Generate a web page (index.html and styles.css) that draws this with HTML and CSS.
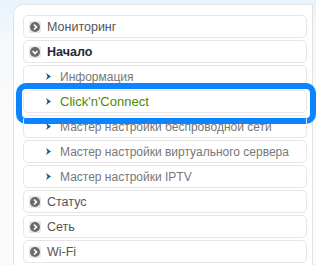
FILE: index.html
```html
<!DOCTYPE html>
<html lang="ru">
<head>
    <meta charset="UTF-8">
    <title>Меню</title>
    <link rel="stylesheet" href="styles.css">
</head>
<body>
    <div class="menu-panel">
        <!-- разделы -->
        <div class="menu-item">
            <svg class="sect-icon" width="12" height="12" viewBox="0 0 12 12"><rect width="12" height="12" rx="2" fill="#e8e8e8"/><circle cx="6" cy="6" r="5" fill="#6a6a6a"/><path d="M5 3.5 L7.5 6 L5 8.5" fill="none" stroke="#fff" stroke-width="1.6"/></svg>
            <span>Мониторинг</span>
        </div>
        <div class="menu-item open">
            <svg class="sect-icon" width="12" height="12" viewBox="0 0 12 12"><rect width="12" height="12" rx="2" fill="#e8e8e8"/><circle cx="6" cy="6" r="5" fill="#6a6a6a"/><path d="M3.5 5 L6 7.5 L8.5 5" fill="none" stroke="#fff" stroke-width="1.6"/></svg>
            <span>Начало</span>
        </div>
        <div class="menu-item sub">
            <svg class="sub-icon" width="5" height="7" viewBox="0 0 5 7"><path d="M0 0 L5 3.5 L0 7 L1.5 3.5 Z" fill="#0f5b9e"/></svg>
            <span>Информация</span>
        </div>
        <div class="menu-item sub current">
            <svg class="sub-icon" width="5" height="7" viewBox="0 0 5 7"><path d="M0 0 L5 3.5 L0 7 L1.5 3.5 Z" fill="#0f5b9e"/></svg>
            <span>Click'n'Connect</span>
            <div class="highlight"></div>
        </div>
        <div class="menu-item sub">
            <svg class="sub-icon" width="5" height="7" viewBox="0 0 5 7"><path d="M0 0 L5 3.5 L0 7 L1.5 3.5 Z" fill="#0f5b9e"/></svg>
            <span>Мастер настройки беспроводной сети</span>
        </div>
        <div class="menu-item sub">
            <svg class="sub-icon" width="5" height="7" viewBox="0 0 5 7"><path d="M0 0 L5 3.5 L0 7 L1.5 3.5 Z" fill="#0f5b9e"/></svg>
            <span>Мастер настройки виртуального сервера</span>
        </div>
        <div class="menu-item sub">
            <svg class="sub-icon" width="5" height="7" viewBox="0 0 5 7"><path d="M0 0 L5 3.5 L0 7 L1.5 3.5 Z" fill="#0f5b9e"/></svg>
            <span>Мастер настройки IPTV</span>
        </div>
        <div class="menu-item">
            <svg class="sect-icon" width="12" height="12" viewBox="0 0 12 12"><rect width="12" height="12" rx="2" fill="#e8e8e8"/><circle cx="6" cy="6" r="5" fill="#6a6a6a"/><path d="M5 3.5 L7.5 6 L5 8.5" fill="none" stroke="#fff" stroke-width="1.6"/></svg>
            <span>Статус</span>
        </div>
        <div class="menu-item">
            <svg class="sect-icon" width="12" height="12" viewBox="0 0 12 12"><rect width="12" height="12" rx="2" fill="#e8e8e8"/><circle cx="6" cy="6" r="5" fill="#6a6a6a"/><path d="M5 3.5 L7.5 6 L5 8.5" fill="none" stroke="#fff" stroke-width="1.6"/></svg>
            <span>Сеть</span>
        </div>
        <div class="menu-item">
            <svg class="sect-icon" width="12" height="12" viewBox="0 0 12 12"><rect width="12" height="12" rx="2" fill="#e8e8e8"/><circle cx="6" cy="6" r="5" fill="#6a6a6a"/><path d="M5 3.5 L7.5 6 L5 8.5" fill="none" stroke="#fff" stroke-width="1.6"/></svg>
            <span>Wi-Fi</span>
        </div>
    </div>
</body>
</html>
```

FILE: styles.css
```css
body {
    margin: 0;
    height: 265px;
    overflow: hidden;
    font-family: "Liberation Sans", Arial, sans-serif;
    background: linear-gradient(to bottom, #e8f3fb 0px, #f4f9fd 40px, #fafafa 120px);
}

.menu-panel {
    width: 300px;
    margin: 4px 0 0 13px;
    padding: 10px 5px 0 9px;
    box-sizing: border-box;
    height: 270px;
    background-color: #ffffff;
    border: 1px solid #e2e2e2;
    border-bottom: none;
    border-radius: 10px 0 0 0;
}

/* пункт меню */
.menu-item {
    position: relative;
    display: flex;
    align-items: center;
    height: 23px;
    margin-bottom: 2px;
    padding-left: 5px;
    box-sizing: border-box;
    border: 1px solid #e6e6e6;
    border-radius: 5px;
    font-size: 12.5px;
    color: #555;
    white-space: nowrap;
}

.sect-icon {
    margin-right: 6px;
    flex-shrink: 0;
}

.menu-item.open span {
    font-weight: bold;
    color: #1e2a3a;
}

.menu-item.sub {
    padding-left: 22px;
    color: #777;
    font-size: 12px;
}

.sub-icon {
    margin-right: 9px;
    flex-shrink: 0;
}

.menu-item.current {
    font-size: 13px;
}

.menu-item.current span {
    color: #4d8a00;
}

/* выделение поверх пункта */
.highlight {
    position: absolute;
    left: -8px;
    top: -8px;
    width: 300px;
    height: 41px;
    box-sizing: border-box;
    border: 6px solid #0a84ff;
    border-radius: 10px;
}
```
